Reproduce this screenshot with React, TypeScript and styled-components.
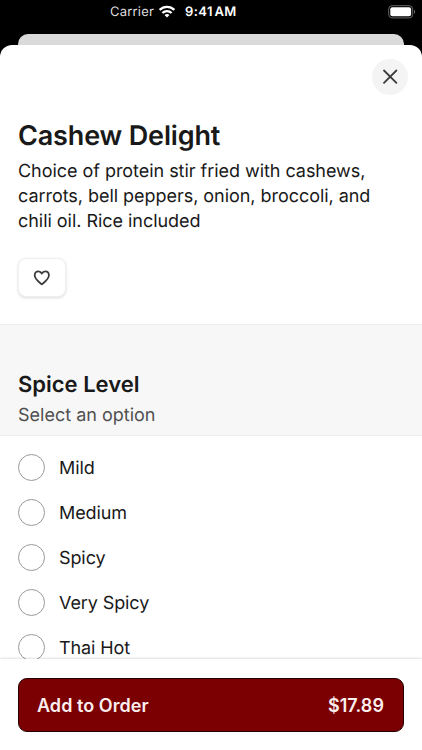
import React from "react";
import styled, { createGlobalStyle } from "styled-components";

const GlobalStyle = createGlobalStyle`
  *, *::before, *::after { box-sizing: border-box; }
  html, body { margin: 0; padding: 0; background: #000; }
  button { font: inherit; margin: 0; cursor: pointer; }
  h1, h2, p, ul { margin: 0; padding: 0; }
`;

const Screen = styled.div`
  display: flex;
  flex-direction: column;
  width: 422px;
  height: 750px;
  overflow: hidden;
  background: #000;
  color: #191919;
  font-family: Inter, "Liberation Sans", sans-serif;
  text-rendering: geometricPrecision;
`;

const StatusBar = styled.header`
  display: flex;
  align-items: center;
  flex: none;
  height: 34px;
  padding: 0 6px 10px 110px;
  color: #fff;
`;

const StatusText = styled.span<{ $strong?: boolean }>`
  font-size: 13px;
  line-height: 16px;
  font-weight: ${(p) => (p.$strong ? 600 : 400)};
  letter-spacing: ${(p) => (p.$strong ? "0.4px" : "0.2px")};
  word-spacing: ${(p) => (p.$strong ? "-2px" : "0")};
  color: ${(p) => (p.$strong ? "#fff" : "#dedede")};
  white-space: nowrap;
`;

const WifiIcon = styled.svg`
  width: 18px;
  height: 13px;
  margin: -1px 9px 0 4px;
`;

const BatteryIcon = styled.svg`
  width: 28px;
  height: 14px;
  margin: -1px 0 0 auto;
`;

const BackCard = styled.div`
  flex: none;
  height: 11px;
  margin: 0 18px;
  background: #dadada;
  border-radius: 10px 10px 0 0;
`;

const Sheet = styled.main`
  display: flex;
  flex-direction: column;
  flex: 1;
  min-height: 0;
  overflow: hidden;
  background: #fff;
  border-radius: 12px 12px 0 0;
`;

const SheetBody = styled.div`
  flex: 1;
  min-height: 0;
  overflow: hidden;
`;

const SheetTop = styled.div`
  display: flex;
  justify-content: flex-end;
  padding: 14px 14px 0;
`;

const CloseButton = styled.button`
  display: grid;
  place-items: center;
  width: 36px;
  height: 36px;
  padding: 0;
  border: 0;
  border-radius: 50%;
  background: #f4f4f4;
`;

const ItemInfo = styled.section`
  height: 229px;
  padding: 23px 18px 0;
`;

const ItemName = styled.h1`
  font-size: 27px;
  line-height: 36px;
  font-weight: 600;
  letter-spacing: -0.15px;
  white-space: nowrap;
`;

const Description = styled.p`
  margin-top: 6px;
  font-size: 18px;
  line-height: 24.75px;
  letter-spacing: -0.04px;
`;

const FavoriteButton = styled.button`
  display: grid;
  place-items: center;
  width: 48px;
  height: 39px;
  margin-top: 24px;
  padding: 0;
  border: 1px solid #f0f0f0;
  border-radius: 8px;
  background: #fff;
  box-shadow: 0 1px 3px rgba(0, 0, 0, 0.14);
`;

const GroupHeader = styled.div`
  height: 112px;
  padding: 46px 18px 0;
  border-top: 1px solid #ececec;
  border-bottom: 1px solid #ececec;
  background: #f7f7f7;
`;

const GroupTitle = styled.h2`
  font-size: 22px;
  line-height: 28px;
  font-weight: 600;
`;

const GroupHint = styled.p`
  margin-top: 5px;
  font-size: 18px;
  line-height: 24px;
  color: #505050;
`;

const OptionList = styled.ul`
  padding: 9px 18px 0;
  list-style: none;
`;

const OptionRow = styled.li`
  display: flex;
  align-items: center;
  gap: 14px;
  height: 45px;
  font-size: 18px;
`;

const OptionName = styled.span`
  padding-top: 2px;
  line-height: 24px;
  letter-spacing: -0.1px;
`;

const Radio = styled.span`
  flex: none;
  width: 27px;
  height: 27px;
  border: 1px solid #999;
  border-radius: 50%;
  background: #fff;
`;

const Footer = styled.footer`
  position: relative;
  flex: none;
  height: 91px;
  padding: 19px 18px 0;
  background: #fff;
  box-shadow: 0 -1px 2px rgba(0, 0, 0, 0.12);
`;

const OrderButton = styled.button`
  display: flex;
  align-items: center;
  justify-content: space-between;
  width: 100%;
  height: 54px;
  padding: 2px 19px 0 18px;
  border: 1px solid #240000;
  border-radius: 9px;
  background: #7b0002;
  color: #fbeeee;
`;

const OrderText = styled.span`
  font-size: 18px;
  line-height: 24px;
  font-weight: 600;
  letter-spacing: 0.05px;
`;

const options = ["Mild", "Medium", "Spicy", "Very Spicy", "Thai Hot"];

export default function App() {
  return (
    <>
      <GlobalStyle />
      <Screen>
        <StatusBar>
          <StatusText>Carrier</StatusText>
          <WifiIcon viewBox="0 0 18 13" fill="none" stroke="#fff" strokeWidth="2.3">
            <path d="M1.6 4.9a10.6 10.6 0 0 1 14.8 0" />
            <path d="M4.4 8a6.6 6.6 0 0 1 9.2 0" />
            <path d="M9 12.6 6.5 10.1a3.6 3.6 0 0 1 5 0z" fill="#fff" stroke="none" />
          </WifiIcon>
          <StatusText $strong>9:41 AM</StatusText>
          <BatteryIcon viewBox="0 0 28 14" fill="none">
            <rect x="0.7" y="0.7" width="24" height="12.2" rx="3.4" stroke="#666" />
            <rect x="2.3" y="2.3" width="20.8" height="9" rx="2" fill="#fff" />
            <path d="M26 4.8v4c1.6-.6 1.6-3.4 0-4z" fill="#666" />
          </BatteryIcon>
        </StatusBar>
        <BackCard />
        <Sheet>
          <SheetBody>
            <SheetTop>
              <CloseButton aria-label="Close">
                <svg width="16" height="16" viewBox="0 0 16 16" fill="none" stroke="#3c3c3c" strokeWidth="1.8" strokeLinecap="round">
                  <path d="M2 1.5l12.4 12.4M14.4 1.5 2 13.9" />
                </svg>
              </CloseButton>
            </SheetTop>
            <ItemInfo>
              <ItemName>Cashew Delight</ItemName>
              <Description>
                Choice of protein stir fried with cashews,
                <br />
                carrots, bell peppers, onion, broccoli, and
                <br />
                chili oil. Rice included
              </Description>
              <FavoriteButton aria-label="Save to favorites">
                <svg width="18" height="18" viewBox="0 0 18 18" fill="none" stroke="#3c3c3c" strokeWidth="1.8" strokeLinejoin="round">
                  <path d="M8.8 15.3C7.2 13.9 1.7 10.6 1.7 6.3c0-2.4 1.6-4 3.6-4 1.5 0 2.8.8 3.5 2.2.7-1.4 2-2.2 3.5-2.2 2 0 3.6 1.6 3.6 4 0 4.3-5.5 7.6-7.1 9z" />
                </svg>
              </FavoriteButton>
            </ItemInfo>
            <GroupHeader>
              <GroupTitle>Spice Level</GroupTitle>
              <GroupHint>Select an option</GroupHint>
            </GroupHeader>
            <OptionList>
              {options.map((name) => (
                <OptionRow key={name}>
                  <Radio />
                  <OptionName>{name}</OptionName>
                </OptionRow>
              ))}
            </OptionList>
          </SheetBody>
          <Footer>
            <OrderButton>
              <OrderText>Add to Order</OrderText>
              <OrderText>$17.89</OrderText>
            </OrderButton>
          </Footer>
        </Sheet>
      </Screen>
    </>
  );
}
